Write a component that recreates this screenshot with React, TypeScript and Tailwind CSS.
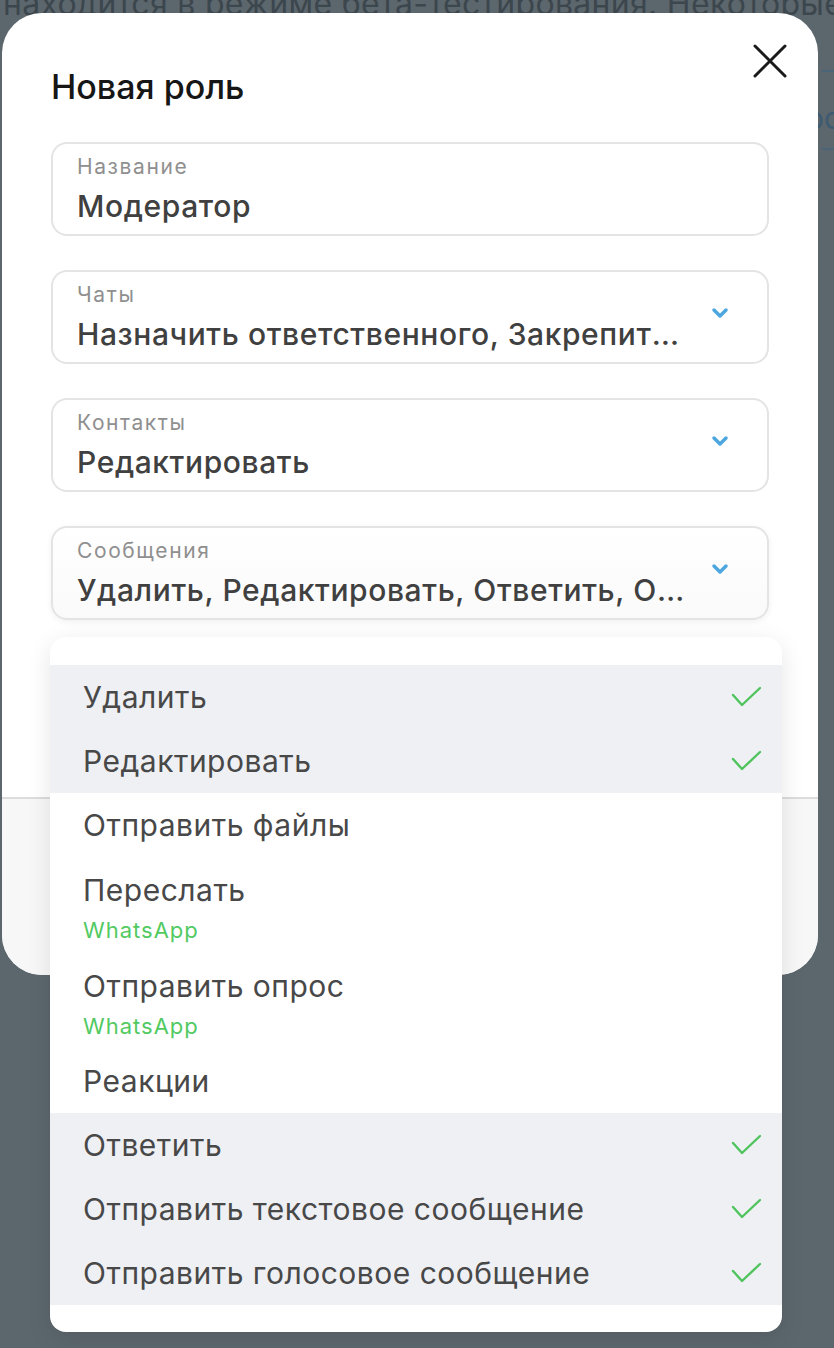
import React from 'react';

interface Option {
  label: string;
  selected: boolean;
  platform?: string;
}

const options: Option[] = [
  { label: 'Удалить', selected: true },
  { label: 'Редактировать', selected: true },
  { label: 'Отправить файлы', selected: false },
  { label: 'Переслать', selected: false, platform: 'WhatsApp' },
  { label: 'Отправить опрос', selected: false, platform: 'WhatsApp' },
  { label: 'Реакции', selected: false },
  { label: 'Ответить', selected: true },
  { label: 'Отправить текстовое сообщение', selected: true },
  { label: 'Отправить голосовое сообщение', selected: true },
];

const fields = [
  { label: 'Название', value: 'Модератор', select: false, active: false },
  { label: 'Чаты', value: 'Назначить ответственного, Закрепить чат, Архивировать', select: true, active: false },
  { label: 'Контакты', value: 'Редактировать', select: true, active: false },
  { label: 'Сообщения', value: 'Удалить, Редактировать, Ответить, Отправить текстовое сообщение', select: true, active: true },
];

const Chevron: React.FC = () => (
  <svg width="18" height="12" viewBox="0 0 18 12" fill="none">
    <path d="M3 3 L9 9 L15 3" stroke="#4ea6e0" strokeWidth={3.5} strokeLinecap="round" strokeLinejoin="round" />
  </svg>
);

const Check: React.FC = () => (
  <svg width="31" height="22" viewBox="0 0 31 22" fill="none">
    <path d="M2 9 L11 19 L29 2" stroke="#4fc45d" strokeWidth={2.4} strokeLinecap="round" strokeLinejoin="round" />
  </svg>
);

const App: React.FC = () => {
  return (
    <div className="relative w-[834px] h-[1348px] overflow-hidden bg-[#5c666d] font-['Inter',sans-serif]">
      {/* page behind the overlay */}
      <div className="-mt-[15px] pl-[3px] text-[32px] leading-[38px] tracking-[0.3px] text-[#3c464d] whitespace-nowrap">
        находится в режиме бета-тестирования. Некоторые функции
      </div>
      <div className="ml-[822px] mt-[47px] w-[12px] border-t-2 border-dashed border-[#4a6478]" />
      <div className="ml-[806px] mt-[28px] text-[30px] leading-[36px] text-[#3e5a70] whitespace-nowrap">ос</div>
      <div className="ml-[822px] mt-[12px] w-[12px] border-t-2 border-dashed border-[#4a6478]" />

      {/* modal */}
      <div className="absolute left-[2px] top-[13px] w-[816px] h-[962px] bg-white rounded-[40px] overflow-hidden flex flex-col">
        <div className="relative px-[49px] pt-[54px]">
          <h1 className="text-[34px] leading-[40px] font-medium text-[#161616]">Новая роль</h1>
          <button className="absolute right-[31px] top-[31px] w-[34px] h-[34px] flex items-center justify-center">
            <svg width="34" height="34" viewBox="0 0 34 34" fill="none">
              <path d="M2 2 L32 32 M32 2 L2 32" stroke="#1a1a1a" strokeWidth={3} strokeLinecap="round" />
            </svg>
          </button>

          <div className="mt-[35px] flex flex-col gap-[34px]">
            {fields.map((f) => (
              <div
                key={f.label}
                className={`h-[94px] rounded-[16px] border-2 border-[#e4e4e4] flex items-center pl-[24px] pr-[38px] ${
                  f.active ? 'bg-gradient-to-b from-white to-[#fafafa] shadow-[0_2px_6px_rgba(0,0,0,0.06)]' : 'bg-white'
                }`}
              >
                <div className="flex-1 min-w-0 flex flex-col">
                  <span className="text-[21px] leading-[24px] tracking-[1.6px] text-[#8f8f8f]">{f.label}</span>
                  <span className="mt-[10px] text-[30px] leading-[34px] tracking-[0.6px] font-medium text-[#404040] truncate pr-[26px]">
                    {f.value}
                  </span>
                </div>
                {f.select && (
                  <div className="-mt-[8px]">
                    <Chevron />
                  </div>
                )}
              </div>
            ))}
          </div>
        </div>

        <div className="mt-auto h-[178px] border-t-2 border-[#dcdcdc] bg-[#f7f7f7]" />
      </div>

      {/* dropdown */}
      <div className="absolute left-[50px] top-[637px] w-[732px] bg-white rounded-[16px] shadow-[0_6px_24px_rgba(0,0,0,0.10)] pt-[28px] pb-[27px]">
        {options.map((o) => (
          <div
            key={o.label}
            className={`flex items-center pl-[33px] pr-[20px] ${o.selected ? 'bg-[#eff0f4]' : 'bg-white'} ${
              o.platform ? 'pt-[16px] pb-[11px]' : 'h-[64px]'
            }`}
          >
            <div className="flex-1 flex flex-col">
              <span className="text-[30px] leading-[34px] tracking-[0.5px] text-[#484848]">{o.label}</span>
              {o.platform && (
                <span className="mt-[11px] text-[22px] leading-[24px] tracking-[1px] text-[#52ca62]">{o.platform}</span>
              )}
            </div>
            {o.selected && <Check />}
          </div>
        ))}
      </div>
    </div>
  );
};

export default App;
